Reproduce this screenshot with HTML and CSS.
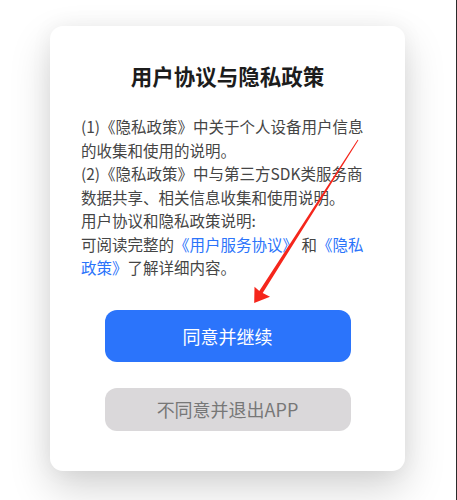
FILE: index.html
```html
<!DOCTYPE html>
<html lang="zh-CN">
<head>
<meta charset="utf-8">
<title>用户协议与隐私政策</title>
<link rel="stylesheet" href="styles.css">
</head>
<body>
<div class="screen">
  <div class="card">
    <h1 class="title">用户协议与隐私政策</h1>
    <div class="content">
      <p class="para">(1)《隐私政策》中关于个人设备用户信息的收集和使用的说明。</p>
      <p class="para">(2)《隐私政策》中与第三方SDK类服务商数据共享、相关信息收集和使用说明。</p>
      <p class="para">用户协议和隐私政策说明:</p>
      <p class="para">可阅读完整的<span class="link">《用户服务协议》</span> 和<span class="link">《隐私政策》</span>了解详细内容。</p>
    </div>
    <div class="actions">
      <button class="btn btn-primary" type="button">同意并继续</button>
      <button class="btn btn-secondary" type="button">不同意并退出APP</button>
    </div>
  </div>
  <svg class="arrow" width="457" height="500" viewBox="0 0 457 500" aria-hidden="true">
    <polygon points="357.6,139.7 358.4,140.3 262.7,293.1 270,296.8 254.2,303 254.5,286.8 259.3,290.9" fill="#f5261c"/>
  </svg>
</div>
</body>
</html>
```

FILE: styles.css
```css
* { box-sizing: border-box; }

html, body {
  margin: 0;
  padding: 0;
  background: #ffffff;
}

body {
  font-family: "Noto Sans CJK SC", "Noto Sans", sans-serif;
}

.screen {
  position: relative;
  width: 457px;
  height: 500px;
  padding: 26px 52px 0 50px;
  border-right: 1px solid #2a2a2a;
  overflow: hidden;
  background: #ffffff;
}

.card {
  width: 355px;
  background: #ffffff;
  border-radius: 13px;
  padding: 36px 31px 40px 31px;
  box-shadow: 0 18px 40px rgba(0, 0, 0, 0.17), 0 0 22px rgba(0, 0, 0, 0.05);
  display: flex;
  flex-direction: column;
}

.title {
  margin: 0 0 25px 0;
  font-size: 21.5px;
  line-height: 28px;
  font-weight: 700;
  color: #1c1c1c;
  text-align: center;
}

.content {
  padding-right: 1px;
}

.para {
  margin: 0;
  font-size: 15.5px;
  line-height: 23.5px;
  color: #454545;
}

.link {
  color: #2b74fb;
}

.actions {
  margin-top: 30px;
  display: flex;
  flex-direction: column;
  align-items: center;
  gap: 26px;
}

.btn {
  width: 246px;
  border: none;
  border-radius: 12px;
  font-family: "Noto Sans CJK SC", "Noto Sans", sans-serif;
  font-size: 18px;
  padding: 0;
  cursor: pointer;
}

.btn-primary {
  height: 52px;
  background: #2b74fb;
  color: #ffffff;
}

.btn-secondary {
  height: 43px;
  background: #dad8da;
  color: #777777;
}

.arrow {
  position: absolute;
  left: 0;
  top: 0;
  pointer-events: none;
}
```
